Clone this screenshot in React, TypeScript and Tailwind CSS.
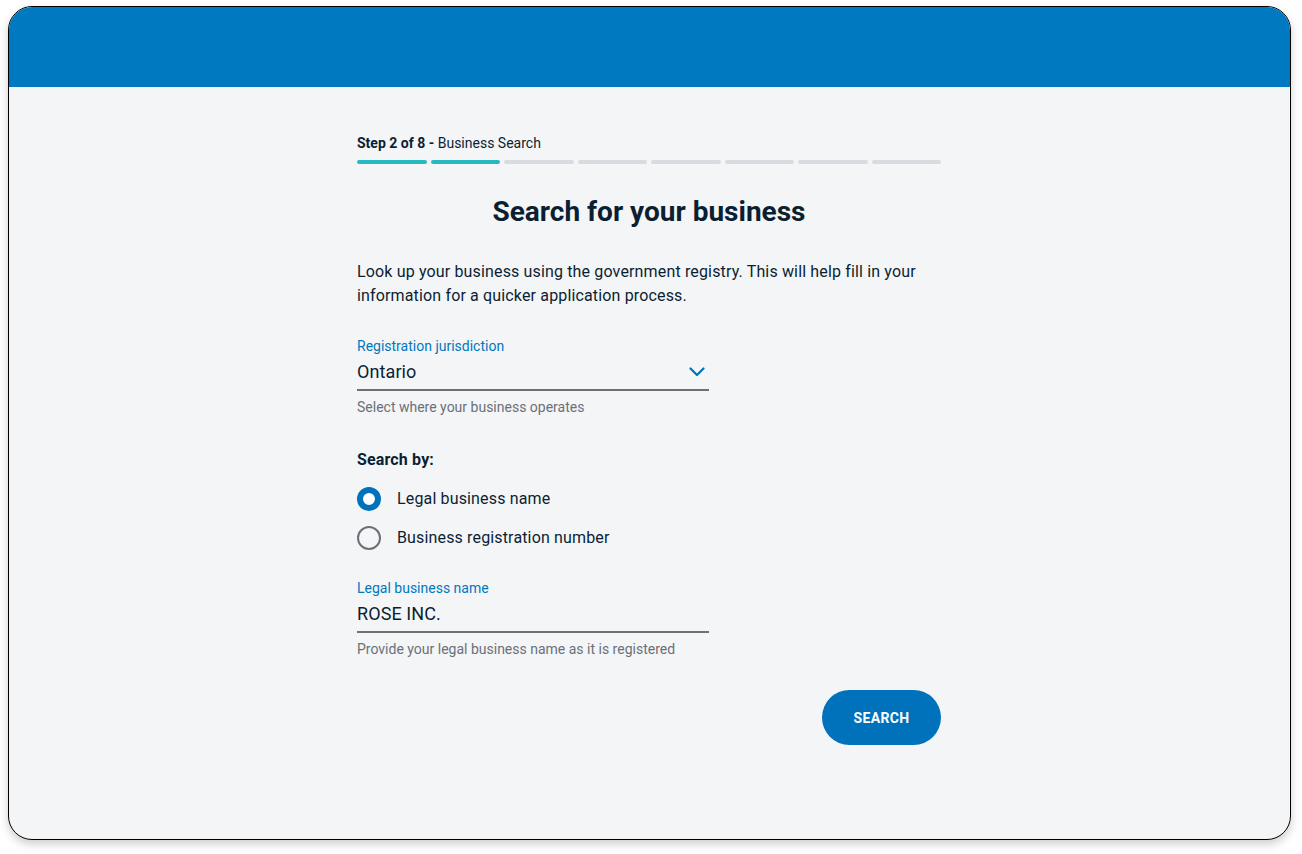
import React from "react";

const steps = [true, true, false, false, false, false, false, false];

function Radio({ checked, label }: { checked: boolean; label: string }) {
  return (
    <label className="flex items-center gap-4 h-6">
      {checked ? (
        <span className="w-6 h-6 rounded-full border-[6px] border-[#0072bb] bg-white" />
      ) : (
        <span className="w-6 h-6 rounded-full border-2 border-[#6b7079] bg-transparent" />
      )}
      <span className="text-base tracking-[0.15px] text-[#0b1f33]">{label}</span>
    </label>
  );
}

function Field({
  label,
  value,
  helper,
  select,
}: {
  label: string;
  value: string;
  helper: string;
  select?: boolean;
}) {
  return (
    <div className="w-[352px]">
      <div className="text-sm leading-5 text-[#0078c0]">{label}</div>
      <div className="flex items-center justify-between h-6 mt-1 mb-[5px]">
        <span className="text-lg leading-6 tracking-[0.1px] text-[#0b1f33]">{value}</span>
        {select && (
          <svg width="16" height="10" viewBox="0 0 16 10" className="mr-[4px]">
            <path d="M1.5 1.5 L8 8 L14.5 1.5" fill="none" stroke="#0072bb" strokeWidth="2.2" strokeLinecap="round" strokeLinejoin="round" />
          </svg>
        )}
      </div>
      <div className="h-[2px] bg-[#6b7079]" />
      <div className="text-sm leading-5 text-[#6b7079] mt-[6px]">{helper}</div>
    </div>
  );
}

export default function App() {
  return (
    <div className="w-[1302px] h-[854px] bg-white pl-2 pt-[6px] font-['Roboto',sans-serif]">
      <div className="w-[1283px] h-[834px] rounded-[24px] border border-black overflow-hidden bg-[#f4f5f7] shadow-[0_4px_10px_rgba(0,0,0,0.2)] flex flex-col">
        <div className="h-[80px] bg-[#0079c1] shrink-0" />
        <div className="flex justify-center pt-[46px] pr-[1px]">
          <div className="w-[584px] flex flex-col">
            <div className="text-sm leading-5 text-[#0b1f33]">
              <span className="font-bold">Step 2 of 8 -</span> Business Search
            </div>
            <div className="flex gap-[4px] mt-[7px]">
              {steps.map((done, i) => (
                <div
                  key={i}
                  className={`flex-1 h-[4px] rounded-full ${done ? "bg-[#27b9bf]" : "bg-[#d9dbe1]"}`}
                />
              ))}
            </div>
            <h1 className="text-[28px] leading-8 font-bold text-center text-[#0b1f33] mt-8">
              Search for your business
            </h1>
            <p className="text-base leading-6 tracking-[0.15px] text-[#0b1f33] mt-8">
              Look up your business using the government registry. This will help fill in your
              information for a quicker application process.
            </p>
            <div className="mt-[28px]">
              <Field
                label="Registration jurisdiction"
                value="Ontario"
                helper="Select where your business operates"
                select
              />
            </div>
            <div className="text-base leading-6 font-bold tracking-[0.15px] text-[#0b1f33] mt-[31px]">Search by:</div>
            <div className="flex flex-col gap-[15px] mt-[15px]">
              <Radio checked label="Legal business name" />
              <Radio checked={false} label="Business registration number" />
            </div>
            <div className="mt-[28px]">
              <Field
                label="Legal business name"
                value="ROSE INC."
                helper="Provide your legal business name as it is registered"
              />
            </div>
            <div className="flex justify-end mt-[31px]">
              <button className="w-[119px] h-[55px] rounded-full bg-[#0072bb] text-white text-sm font-bold tracking-wide">
                SEARCH
              </button>
            </div>
          </div>
        </div>
      </div>
    </div>
  );
}
